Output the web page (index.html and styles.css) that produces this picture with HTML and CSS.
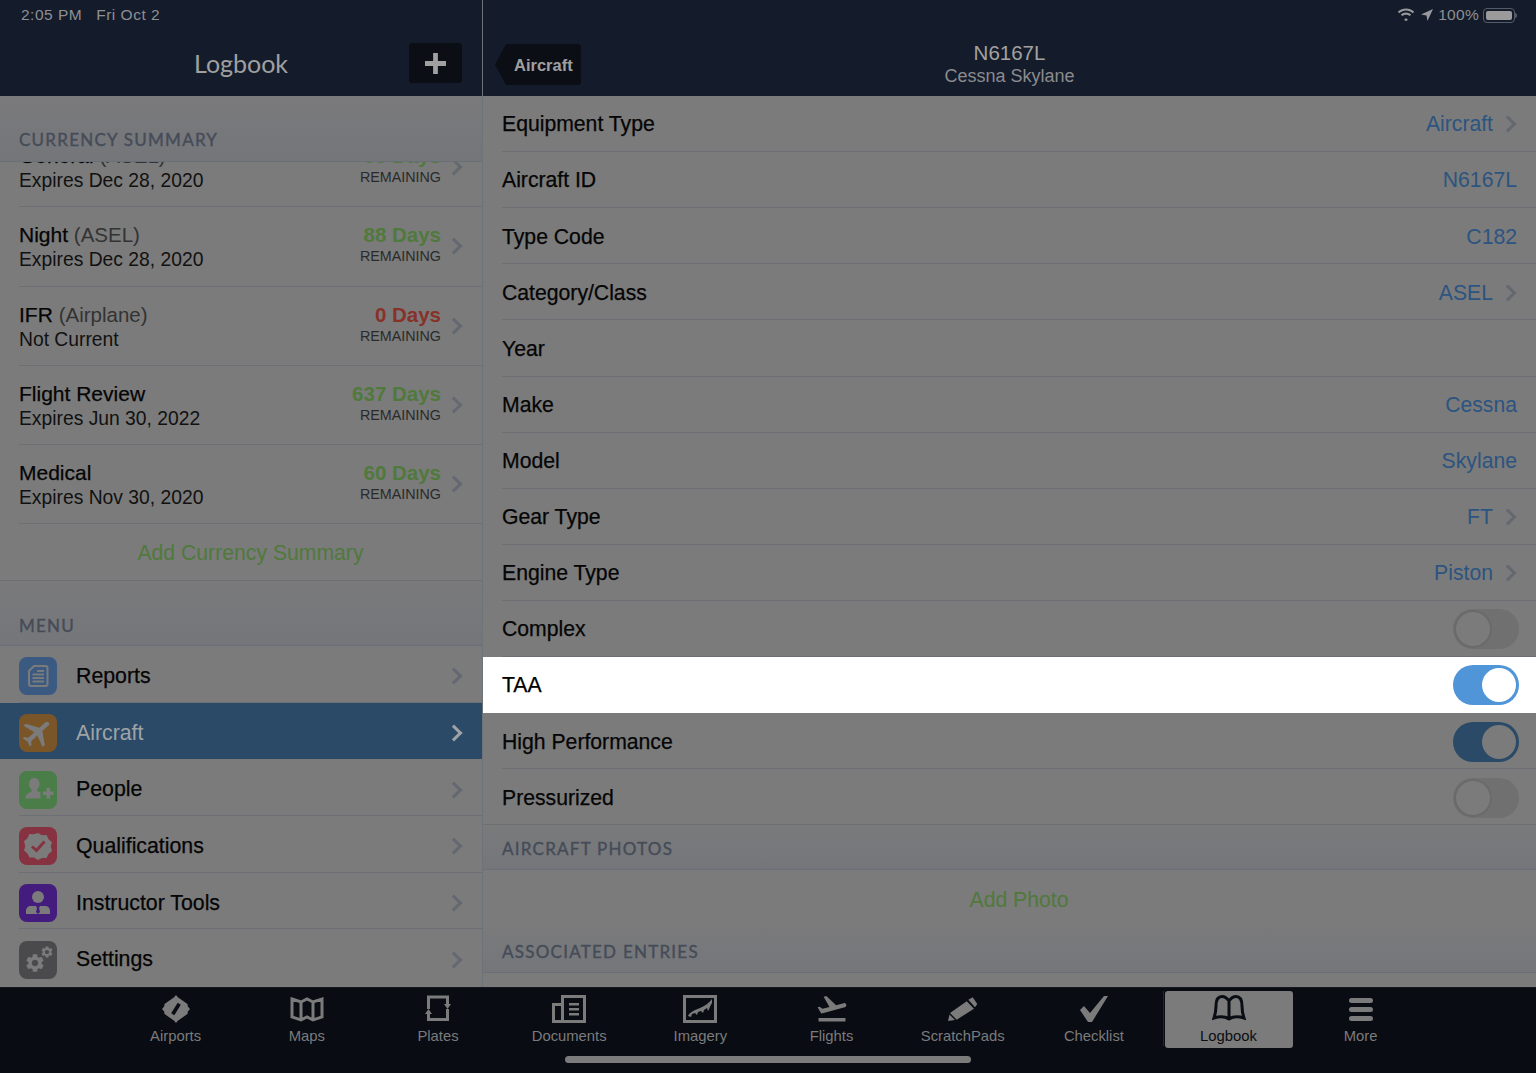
FILE: index.html
```html
<!DOCTYPE html>
<html lang="en">
<head>
  <meta charset="UTF-8" />
  <title>Logbook - N6167L</title>
  <link rel="stylesheet" href="styles.css">
</head>
<body>
  <div class="app">
    <div class="panes">
      <aside class="left">
        <header class="head">
          <div class="status"><span>2:05 PM</span><span>Fri Oct 2</span></div>
          <div class="left-nav">
            <h1>Logbook</h1>
            <button class="add-btn">
              <svg viewBox="0 0 22 22"><path d="M8.500 0h5v8.500H22v5h-8.500V22h-5v-8.500H0v-5h8.500z"/></svg>
            </button>
          </div>
        </header>

        <div class="section-head tall"><span>CURRENCY SUMMARY</span></div>
        <div class="currency-scroll">
          <div class="currency-list">
            <div class="cur-row">
              <div class="cur-info">
                <div class="cur-name">General <span class="muted">(ASEL)</span></div>
                <div class="cur-sub">Expires Dec 28, 2020</div>
              </div>
              <div class="cur-days"><div class="days green">88 Days</div><div class="remain">REMAINING</div></div>
              <i class="chev"></i>
            </div>
            <div class="cur-row">
              <div class="cur-info">
                <div class="cur-name">Night <span class="muted">(ASEL)</span></div>
                <div class="cur-sub">Expires Dec 28, 2020</div>
              </div>
              <div class="cur-days"><div class="days green">88 Days</div><div class="remain">REMAINING</div></div>
              <i class="chev"></i>
            </div>
            <div class="cur-row">
              <div class="cur-info">
                <div class="cur-name">IFR <span class="muted">(Airplane)</span></div>
                <div class="cur-sub">Not Current</div>
              </div>
              <div class="cur-days"><div class="days red">0 Days</div><div class="remain">REMAINING</div></div>
              <i class="chev"></i>
            </div>
            <div class="cur-row">
              <div class="cur-info">
                <div class="cur-name">Flight Review</div>
                <div class="cur-sub">Expires Jun 30, 2022</div>
              </div>
              <div class="cur-days"><div class="days green">637 Days</div><div class="remain">REMAINING</div></div>
              <i class="chev"></i>
            </div>
            <div class="cur-row">
              <div class="cur-info">
                <div class="cur-name">Medical</div>
                <div class="cur-sub">Expires Nov 30, 2020</div>
              </div>
              <div class="cur-days"><div class="days green">60 Days</div><div class="remain">REMAINING</div></div>
              <i class="chev"></i>
            </div>
          </div>
        </div>
        <div class="add-row left-add">Add Currency Summary</div>

        <div class="section-head menu-head"><span>MENU</span></div>
        <nav class="menu">
          <a class="menu-row">
            <span class="menu-icon blue">
              <svg viewBox="0 0 38 38"><path class="glyph-line" d="M15 9h11.500a2 2 0 0 1 2 2v16a2 2 0 0 1-2 2H12a2 2 0 0 1-2-2V14zM13.500 17.500h11.500M13.500 21h11.500M13.500 24.500h11.500M18 14h7"/></svg>
            </span>
            <span class="menu-label">Reports</span><i class="chev"></i>
          </a>
          <a class="menu-row selected">
            <span class="menu-icon orange">
              <svg viewBox="0 0 24 24"><path transform="rotate(48 12 12)" d="M21 16v-2l-8-5V3.500c0-.83-.67-1.500-1.500-1.500S10 2.670 10 3.500V9l-8 5v2l8-2.500V19l-2 1.500V22l3.500-1 3.500 1v-1.500L13 19v-5.500l8 2.500z"/></svg>
            </span>
            <span class="menu-label">Aircraft</span><i class="chev"></i>
          </a>
          <a class="menu-row">
            <span class="menu-icon green-bg">
              <svg viewBox="0 0 38 38"><path d="M15 7c3.500 0 5.500 2.700 5.500 6 0 2.500-1 4.500-2.500 5.500v1.500c1 .5 2 1 3.500 1.500v6H6.500c0-3 1-4.500 3-5.200l3-1.800v-2C11 17.500 10 15.500 10 13c0-3.300 2-6 5-6zM27.500 17H31v3.500h3.500V24H31v3.500h-3.500V24H24v-3.500h3.500z"/></svg>
            </span>
            <span class="menu-label">People</span><i class="chev"></i>
          </a>
          <a class="menu-row">
            <span class="menu-icon red-bg">
              <svg viewBox="0 0 38 38"><path d="M19 6l4 2.300 4.600-.2 1.900 4.100 3.500 3-1.300 4.400 1.300 4.400-3.500 3-1.900 3.900-4.600.1L19 33l-4-2.500-4.600-.1-1.900-3.900-3.500-3 1.300-4.400L5 14.200l3.500-3 1.900-4.100 4.600.2z"/><path class="glyph-check" d="M13 19.500l4.500 4 8-9"/></svg>
            </span>
            <span class="menu-label">Qualifications</span><i class="chev"></i>
          </a>
          <a class="menu-row">
            <span class="menu-icon purple">
              <svg viewBox="0 0 38 38"><circle cx="19" cy="13" r="6"/><path d="M7 30v-3c0-3 2-5 5-5h5l1 2-1 4 2 2 2-2-1-4 1-2h5c3 0 5 2 5 5v3z"/></svg>
            </span>
            <span class="menu-label">Instructor Tools</span><i class="chev"></i>
          </a>
          <a class="menu-row last">
            <span class="menu-icon grey">
              <svg viewBox="0 0 38 38">
                <use href="#gear" x="5" y="11" width="22" height="22"/>
                <use href="#gear" x="21" y="4" width="14" height="14"/>
              </svg>
            </span>
            <span class="menu-label">Settings</span><i class="chev"></i>
          </a>
        </nav>
      </aside>

      <main class="right">
        <header class="head">
          <div class="status end">
            <svg class="st-wifi" viewBox="0 0 18 13"><path d="M9 10l2 2-2 1-2-1zM3.800 6.600C6.800 3.800 11.200 3.800 14.200 6.600l-1.500 1.500C10.500 6.200 7.500 6.200 5.300 8.100zM.8 3.700C5.600-.6 12.400-.6 17.200 3.700l-1.500 1.500C11.700 1.700 6.300 1.700 2.300 5.200z"/></svg>
            <svg class="st-loc" viewBox="0 0 13 13"><path d="M13 0L7 13 6 7 0 6z"/></svg>
            <span class="st-pct">100%</span>
            <span class="battery"><span class="battery-fill"></span></span>
          </div>
          <div class="right-nav">
            <div class="back-cell"><button class="back-btn">Aircraft</button></div>
            <div class="nav-title">
              <div class="tail">N6167L</div>
              <div class="model">Cessna Skylane</div>
            </div>
            <div></div>
          </div>
        </header>

        <div class="form-row"><span class="label">Equipment Type</span><span class="value">Aircraft</span><i class="chev"></i></div>
        <div class="form-row"><span class="label">Aircraft ID</span><span class="value">N6167L</span></div>
        <div class="form-row"><span class="label">Type Code</span><span class="value">C182</span></div>
        <div class="form-row"><span class="label">Category/Class</span><span class="value">ASEL</span><i class="chev"></i></div>
        <div class="form-row"><span class="label">Year</span></div>
        <div class="form-row"><span class="label">Make</span><span class="value">Cessna</span></div>
        <div class="form-row"><span class="label">Model</span><span class="value">Skylane</span></div>
        <div class="form-row"><span class="label">Gear Type</span><span class="value">FT</span><i class="chev"></i></div>
        <div class="form-row"><span class="label">Engine Type</span><span class="value">Piston</span><i class="chev"></i></div>
        <div class="form-row"><span class="label">Complex</span><span class="toggle"><span class="knob"></span></span></div>
        <div class="form-row lit"><span class="label">TAA</span><span class="toggle on"><span class="knob"></span></span></div>
        <div class="form-row"><span class="label">High Performance</span><span class="toggle on dim"><span class="knob"></span></span></div>
        <div class="form-row no-line"><span class="label">Pressurized</span><span class="toggle"><span class="knob"></span></span></div>

        <div class="section-head short"><span>AIRCRAFT PHOTOS</span></div>
        <div class="add-row photo-add">Add Photo</div>
        <div class="section-head short"><span>ASSOCIATED ENTRIES</span></div>
      </main>
    </div>

    <footer class="tabbar">
      <div class="tab">
        <svg viewBox="0 0 30 30"><path d="M15 0l2 2.500L25 8l2.500 2v2l2.500 3-2.500 3v2L25 22l-8 5.500L15 30l-2-2.500L5 22l-2.500-2v-2L0 15l2.500-3v-2L5 8l8-5.500z"/><path class="cut" d="M11.500 20.500l7-11"/></svg>
        <span>Airports</span>
      </div>
      <div class="tab">
        <svg viewBox="0 0 34 26"><path class="line" d="M2 3l9 3 6-3 6 3 9-3v18l-9 3-6-3-6 3-9-3zM11 6v18M23 6v18"/></svg>
        <span>Maps</span>
      </div>
      <div class="tab">
        <svg viewBox="0 0 26 28"><path class="line" d="M3.500 14V2h19v8M22.500 14v10.500h-19V19"/><path d="M19 9h7l-3.500 5zM0 19h7l-3.500-5z"/></svg>
        <span>Plates</span>
      </div>
      <div class="tab">
        <svg viewBox="0 0 34 28"><path class="line" d="M10.500 1.500h22v25h-31V9.500h9zM10.500 9.500v17"/><path d="M17 8h10v2.500H17zM17 13h10v2.500H17zM17 18h10v2.500H17z"/></svg>
        <span>Documents</span>
      </div>
      <div class="tab">
        <svg viewBox="0 0 34 28"><path class="line" d="M1.500 1.500h31v25h-31z"/><path d="M5 21c2-4 7-6 12-8 5-2 9-5 12-9v4c-2 3-3 7-4 8l-1-3-3 2-1 3-2-2-3 1-1 3-2-2-3 1-1 3z"/></svg>
        <span>Imagery</span>
      </div>
      <div class="tab">
        <svg class="wide" viewBox="0 0 24 24"><path d="M2.500 19h19v2.500h-19zm19.570-9.360c-.21-.8-1.040-1.280-1.840-1.060L14.920 10l-6.900-6.430-1.930.51 4.140 7.170-4.970 1.330-1.970-1.540-1.450.39 1.820 3.160.77 1.330 1.600-.43 5.310-1.420 4.350-1.160L21 11.490c.81-.23 1.280-1.050 1.070-1.850z"/></svg>
        <span>Flights</span>
      </div>
      <div class="tab">
        <svg viewBox="0 0 34 28"><path d="M20.700 6.300L28 13.700 10.700 24.700 4 18zM22.300 4.700l4.400-2.400 4.600 6.700-2.300 3.300zM2 26l1.500-6.500L9 25z"/></svg>
        <span>ScratchPads</span>
      </div>
      <div class="tab">
        <svg viewBox="0 0 30 28"><path d="M1 15l4-4 6 7L25 1h4L13 27H9z"/></svg>
        <span>Checklist</span>
      </div>
      <div class="tab-sep"></div>
      <div class="tab active">
        <svg viewBox="0 0 34 28"><path class="line" d="M17 6c-2-3-4-4.500-7-4.500-4 0-6 4-6 9.500 0 5-1 9-2 12 5-1.500 11-1.500 15 1 4-2.500 10-2.500 15-1-1-3-2-7-2-12 0-5.500-2-9.500-6-9.500-3 0-5 1.500-7 4.500zM17 6v18"/></svg>
        <span>Logbook</span>
      </div>
      <div class="tab">
        <svg viewBox="0 0 26 28"><path d="M3.500 3h19a2.500 2.500 0 0 1 0 5h-19a2.500 2.500 0 0 1 0-5zM3.500 12h19a2.500 2.500 0 0 1 0 5h-19a2.500 2.500 0 0 1 0-5zM3.500 21h19a2.500 2.500 0 0 1 0 5h-19a2.500 2.500 0 0 1 0-5z"/></svg>
        <span>More</span>
      </div>
      <div class="home-bar"></div>
    </footer>
  </div>

  <svg class="sprite">
    <symbol id="gear" viewBox="0 0 24 24"><path fill-rule="evenodd" d="M19.140 12.940c.04-.3.06-.61.06-.94 0-.32-.02-.64-.07-.94l2.030-1.580c.18-.14.23-.41.12-.61l-1.920-3.320c-.12-.22-.37-.29-.59-.22l-2.390.96c-.5-.38-1.030-.7-1.620-.94l-.36-2.540c-.04-.24-.24-.41-.48-.41h-3.840c-.24 0-.43.17-.47.41l-.36 2.540c-.59.24-1.130.57-1.620.94l-2.390-.96c-.22-.08-.47 0-.59.22L2.740 8.870c-.12.21-.08.47.12.61l2.030 1.580c-.05.3-.09.63-.09.94s.02.64.07.94l-2.030 1.580c-.18.14-.23.41-.12.61l1.920 3.320c.12.22.37.29.59.22l2.390-.96c.5.38 1.030.7 1.620.94l.36 2.54c.05.24.24.41.48.41h3.840c.24 0 .44-.17.47-.41l.36-2.540c.59-.24 1.130-.56 1.620-.94l2.390.96c.22.08.47 0 .59-.22l1.920-3.320c.12-.22.07-.47-.12-.61l-2.010-1.580zM12 15.600c-1.980 0-3.600-1.620-3.600-3.600s1.620-3.600 3.600-3.600 3.600 1.620 3.600 3.600-1.620 3.600-3.600 3.600z"/></symbol>
  </svg>
</body>
</html>
```
FILE: styles.css
```css
* {
  box-sizing: border-box;
}
body {
  margin: 0;
  background: #090c13;
  font-family: "Liberation Sans", Arial, sans-serif;
  color: #050505;
  overflow: hidden;
}
.sprite {
  display: none;
}
.app {
  height: 1073px;
  display: flex;
  flex-direction: column;
}
.panes {
  height: 987px;
  display: flex;
  background: #7b7b7b;
}
.left {
  width: 483px;
  border-right: 1px solid #6e7279;
  display: flex;
  flex-direction: column;
}
.right {
  flex: 1;
  display: flex;
  flex-direction: column;
  overflow: hidden;
}

/* top bars */
.head {
  height: 96px;
  flex: none;
  background: #141c2b;
  color: #a4a4a4;
}
.status {
  height: 30px;
  padding: 6px 0 0 21px;
  font-size: 15.500px;
  letter-spacing: 0.5px;
  color: #8e8f92;
  display: flex;
  gap: 14px;
}
.status.end {
  padding: 7px 19px 0 0;
  justify-content: flex-end;
  align-items: flex-start;
  gap: 0;
}
.st-wifi {
  width: 18px;
  height: 13px;
  margin-top: 1px;
  fill: #98999c;
}
.st-loc {
  width: 12px;
  height: 12px;
  margin: 2px 5px 0 6px;
  fill: #98999c;
}
.st-pct {
  line-height: 16px;
  letter-spacing: 0.3px;
}
.battery {
  width: 32px;
  height: 15px;
  margin: 1px 2px 0 4px;
  border: 1px solid #555b66;
  border-radius: 4px;
  padding: 2px;
  display: flex;
  position: relative;
}
.battery::after {
  content: "";
  position: absolute;
  right: -3px;
  top: 4px;
  width: 2px;
  height: 5px;
  background: #555b66;
  border-radius: 0 2px 2px 0;
}
.battery-fill {
  flex: 1;
  background: #9b9b9b;
  border-radius: 2px;
}
.left-nav {
  height: 66px;
  padding: 13px 20px 0 0;
  display: flex;
  justify-content: flex-end;
  align-items: flex-start;
  position: relative;
}
.left-nav h1 {
  position: absolute;
  left: 0;
  right: 0;
  top: 18px;
  margin: 0;
  text-align: center;
  font: 400 25px "Lato", sans-serif;
  color: #a0a0a0;
}
.add-btn {
  width: 53px;
  height: 40px;
  border: none;
  border-radius: 3px;
  background: #0b0e15;
  display: flex;
  align-items: center;
  justify-content: center;
  padding: 0;
}
.add-btn svg {
  width: 21px;
  height: 21px;
  fill: #a0a0a0;
}
.right-nav {
  height: 66px;
  display: grid;
  grid-template-columns: 1fr auto 1fr;
}
.back-cell {
  padding: 14px 0 0 12px;
}
.back-btn {
  height: 41px;
  width: 86px;
  border: none;
  padding: 1px 0 0 19px;
  text-align: left;
  background: #0b0e15;
  color: #a0a0a0;
  font: 700 16.500px "Liberation Sans", sans-serif;
  clip-path: polygon(0 50%, 11px 0, 100% 0, 100% 100%, 11px 100%);
  border-radius: 3px;
}
.nav-title {
  text-align: center;
  padding-top: 11px;
}
.tail {
  font-size: 20.500px;
  line-height: 23px;
  color: #a2a2a2;
}
.model {
  font-size: 18px;
  line-height: 24px;
  color: #8a8b8e;
}

/* section headers */
.section-head {
  flex: none;
  background: linear-gradient(#7a7a7b, #74767a);
  color: #454c58;
  font: 400 17px "Lato", sans-serif;
  -webkit-text-stroke: 0.4px #454c58;
  letter-spacing: 1.250px;
  padding-left: 19px;
  border-bottom: 1px solid #6a6f77;
  display: flex;
  align-items: flex-end;
}
.section-head.tall {
  height: 66px;
  padding-bottom: 11px;
}
.section-head.menu-head {
  height: 65px;
  padding-bottom: 9px;
}
.section-head.short {
  height: 45px;
  padding-bottom: 10px;
}

/* currency list */
.currency-scroll {
  height: 362px;
  flex: none;
  overflow: hidden;
}
.currency-list {
  margin-top: -34px;
}
.cur-row {
  height: 79.250px;
  margin-left: 19px;
  padding-right: 19px;
  border-bottom: 1px solid #6c6f74;
  display: flex;
  align-items: center;
}
.cur-info {
  flex: 1;
  padding-top: 2px;
}
.cur-name {
  font-size: 21px;
  line-height: 25px;
  -webkit-text-stroke: 0.25px;
}
.cur-sub {
  font-size: 19.300px;
  line-height: 25px;
  color: #111;
}
.muted {
  color: #333;
  -webkit-text-stroke: 0;
  font-size: 20.500px;
}
.cur-days {
  text-align: right;
  margin-right: 7px;
  padding-bottom: 4px;
}
.days {
  font-size: 20.500px;
  line-height: 24px;
  font-weight: 700;
}
.green {
  color: #50793c;
}
.red {
  color: #873229;
}
.remain {
  font-size: 14.300px;
  line-height: 18px;
  color: #2a2a2a;
}
.chev {
  width: 12px;
  height: 12px;
  flex: none;
  border-top: 3px solid #646870;
  border-right: 3px solid #646870;
  transform: rotate(45deg);
  margin-right: 3px;
}
.add-row {
  flex: none;
  text-align: center;
  color: #50793c;
  font-size: 21.200px;
  padding-left: 19px;
  display: flex;
  align-items: center;
  justify-content: center;
}
.left-add {
  height: 58px;
  padding-top: 3px;
  border-bottom: 1px solid #6c6f74;
  margin-top: -1px;
}
.photo-add {
  height: 58px;
  padding-top: 2px;
}

/* menu */
.menu {
  display: flex;
  flex-direction: column;
  flex: 1;
}
.menu-row {
  height: 56.700px;
  padding: 4px 19px 0;
  display: flex;
  align-items: center;
  position: relative;
  font-size: 21.300px;
}
.menu-row::after {
  content: "";
  position: absolute;
  left: 19px;
  right: 0;
  bottom: 0;
  height: 1px;
  background: #6c6f74;
}
.menu-row.selected {
  background: #2a4a68;
  color: #a0a3a6;
}
.menu-row.selected .chev {
  border-color: #a0a3a6;
}
.menu-row.selected::after,
.menu-row.last::after {
  display: none;
}
.menu-icon {
  width: 38px;
  height: 38px;
  border-radius: 8px;
  flex: none;
  margin-right: 19px;
  display: flex;
}
.menu-icon svg {
  width: 100%;
  height: 100%;
  fill: #7b7b7b;
}
.menu-icon.orange svg {
  padding: 1px;
}
.menu-label {
  flex: 1;
  -webkit-text-stroke: 0.25px;
}
.menu-row.selected .menu-label {
  -webkit-text-stroke: 0;
}
.blue {
  background: #3a5a82;
}
.orange {
  background: #7a5528;
}
.green-bg {
  background: #4a7d47;
}
.red-bg {
  background: #873240;
}
.purple {
  background: #431c7d;
}
.grey {
  background: #4a4a4c;
}
.glyph-line {
  fill: none;
  stroke: #7b7b7b;
  stroke-width: 2;
}
.glyph-check {
  fill: none;
  stroke: #873240;
  stroke-width: 3;
}

/* aircraft form */
.form-row {
  height: 56.120px;
  flex: none;
  padding: 0.5px 19px 0;
  display: flex;
  align-items: center;
  position: relative;
}
.form-row::after {
  content: "";
  position: absolute;
  left: 19px;
  right: 0;
  bottom: 0;
  height: 1px;
  background: #6c6f74;
}
.form-row.no-line::after {
  left: 0;
}
.form-row.lit {
  background: #fff;
  color: #000;
}
.form-row.lit::after {
  display: none;
}
.label {
  flex: 1;
  font-size: 21.200px;
  -webkit-text-stroke: 0.25px;
}
.value {
  font-size: 21.200px;
  color: #2c5480;
}
.form-row .chev {
  margin-left: 9px;
  margin-right: 3px;
}
.toggle {
  width: 66px;
  height: 40px;
  margin-right: -2px;
  border-radius: 20px;
  background: #707070;
  padding: 3px;
  display: flex;
}
.knob {
  width: 34px;
  height: 34px;
  border-radius: 50%;
  background: #7b7b7b;
  box-shadow: 0 0 0 2px #6a6a6a;
}
.toggle.on {
  background: #5095d8;
  justify-content: flex-end;
}
.toggle.on .knob {
  background: #fff;
  box-shadow: none;
}
.toggle.on.dim {
  background: #2a4a68;
}
.toggle.on.dim .knob {
  background: #7b7b7b;
}

/* tab bar */
.tabbar {
  height: 86px;
  padding-left: 110px;
  border-top: 1px solid #14171e;
  display: flex;
  align-items: flex-start;
  position: relative;
  background: #090c13;
}
.tab {
  width: 131.200px;
  height: 57px;
  margin-top: 3px;
  display: flex;
  flex-direction: column;
  align-items: center;
  color: #7b7b7b;
  font-size: 14.800px;
}
.tab svg {
  width: 34px;
  height: 28px;
  margin-top: 4px;
  margin-bottom: 5px;
  fill: #7b7b7b;
}
.tab svg.wide {
  height: 34px;
  margin-top: 0;
  margin-bottom: 3px;
}
.tab .line {
  fill: none;
  stroke: #7b7b7b;
  stroke-width: 3;
}
.tab .cut {
  fill: none;
  stroke: #090c13;
  stroke-width: 4;
}
.tab-sep {
  width: 1px;
  height: 55px;
  margin: 3px 1px 0 3px;
  background: #23262d;
}
.tab.active {
  width: 128px;
  margin-right: 2.500px;
  background: #7b7b7b;
  color: #0a0d14;
  border-radius: 3px;
}
.tab.active .line {
  stroke: #0a0d14;
}
.home-bar {
  position: absolute;
  left: 565px;
  top: 68px;
  width: 406px;
  height: 7px;
  border-radius: 4px;
  background: #7b7b7b;
}
```
